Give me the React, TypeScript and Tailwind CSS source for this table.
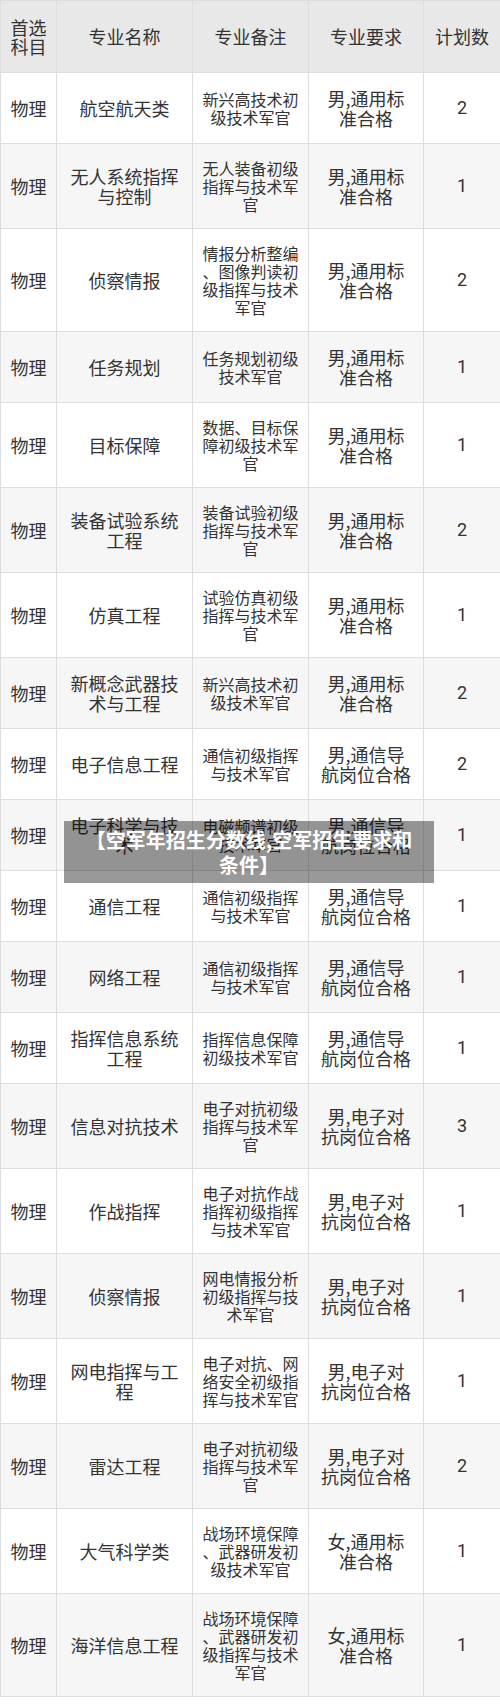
type Row = {
  name: string[]
  note: string[]
  req: string[]
  plan: number
}

const rows: Row[] = [
  { name: ['航空航天类'], note: ['新兴高技术初', '级技术军官'], req: ['男,通用标', '准合格'], plan: 2 },
  { name: ['无人系统指挥', '与控制'], note: ['无人装备初级', '指挥与技术军', '官'], req: ['男,通用标', '准合格'], plan: 1 },
  { name: ['侦察情报'], note: ['情报分析整编', '、图像判读初', '级指挥与技术', '军官'], req: ['男,通用标', '准合格'], plan: 2 },
  { name: ['任务规划'], note: ['任务规划初级', '技术军官'], req: ['男,通用标', '准合格'], plan: 1 },
  { name: ['目标保障'], note: ['数据、目标保', '障初级技术军', '官'], req: ['男,通用标', '准合格'], plan: 1 },
  { name: ['装备试验系统', '工程'], note: ['装备试验初级', '指挥与技术军', '官'], req: ['男,通用标', '准合格'], plan: 2 },
  { name: ['仿真工程'], note: ['试验仿真初级', '指挥与技术军', '官'], req: ['男,通用标', '准合格'], plan: 1 },
  { name: ['新概念武器技', '术与工程'], note: ['新兴高技术初', '级技术军官'], req: ['男,通用标', '准合格'], plan: 2 },
  { name: ['电子信息工程'], note: ['通信初级指挥', '与技术军官'], req: ['男,通信导', '航岗位合格'], plan: 2 },
  { name: ['电子科学与技', '术'], note: ['电磁频谱初级', '技术军官'], req: ['男,通信导', '航岗位合格'], plan: 1 },
  { name: ['通信工程'], note: ['通信初级指挥', '与技术军官'], req: ['男,通信导', '航岗位合格'], plan: 1 },
  { name: ['网络工程'], note: ['通信初级指挥', '与技术军官'], req: ['男,通信导', '航岗位合格'], plan: 1 },
  { name: ['指挥信息系统', '工程'], note: ['指挥信息保障', '初级技术军官'], req: ['男,通信导', '航岗位合格'], plan: 1 },
  { name: ['信息对抗技术'], note: ['电子对抗初级', '指挥与技术军', '官'], req: ['男,电子对', '抗岗位合格'], plan: 3 },
  { name: ['作战指挥'], note: ['电子对抗作战', '指挥初级指挥', '与技术军官'], req: ['男,电子对', '抗岗位合格'], plan: 1 },
  { name: ['侦察情报'], note: ['网电情报分析', '初级指挥与技', '术军官'], req: ['男,电子对', '抗岗位合格'], plan: 1 },
  { name: ['网电指挥与工', '程'], note: ['电子对抗、网', '络安全初级指', '挥与技术军官'], req: ['男,电子对', '抗岗位合格'], plan: 1 },
  { name: ['雷达工程'], note: ['电子对抗初级', '指挥与技术军', '官'], req: ['男,电子对', '抗岗位合格'], plan: 2 },
  { name: ['大气科学类'], note: ['战场环境保障', '、武器研发初', '级技术军官'], req: ['女,通用标', '准合格'], plan: 1 },
  { name: ['海洋信息工程'], note: ['战场环境保障', '、武器研发初', '级指挥与技术', '军官'], req: ['女,通用标', '准合格'], plan: 1 },
]

function Lines({ lines }: { lines: string[] }) {
  return (
    <>
      {lines.map((l, i) => (
        <span key={i} className="block whitespace-nowrap">
          {l}
        </span>
      ))}
    </>
  )
}

const cell = 'border border-[#dddddd] text-center align-middle py-[15px] px-0'

export default function App() {
  return (
    <div className="relative w-[500px] bg-white text-[#333333] font-['Noto_Sans_CJK_SC','Noto_Sans',sans-serif]">
      <table className="w-full table-fixed border-collapse">
        <colgroup>
          <col className="w-[56px]" />
          <col className="w-[136px]" />
          <col className="w-[116px]" />
          <col className="w-[115px]" />
          <col className="w-[77px]" />
        </colgroup>
        <thead>
          <tr className="h-[72px] bg-[#e8e8e8] text-[18px] leading-[19px] font-normal">
            <th className={`${cell} font-normal`}>
              <Lines lines={['首选', '科目']} />
            </th>
            <th className={`${cell} font-normal`}>专业名称</th>
            <th className={`${cell} font-normal`}>专业备注</th>
            <th className={`${cell} font-normal`}>专业要求</th>
            <th className={`${cell} font-normal`}>计划数</th>
          </tr>
        </thead>
        <tbody>
          {rows.map((r, i) => (
            <tr key={i} className={i % 2 === 0 ? 'bg-white' : 'bg-[#f6f6f6]'}>
              <td className={`${cell} text-[18px] leading-[20px]`}>物理</td>
              <td className={`${cell} text-[18px] leading-[20px]`}>
                <Lines lines={r.name} />
              </td>
              <td className={`${cell} text-[16px] leading-[18px]`}>
                <Lines lines={r.note} />
              </td>
              <td className={`${cell} text-[18px] leading-[20px]`}>
                <Lines lines={r.req} />
              </td>
              <td className={`${cell} text-[18px] leading-[20px] font-['Roboto','Noto_Sans_CJK_SC',sans-serif]`}>
                {r.plan}
              </td>
            </tr>
          ))}
        </tbody>
      </table>

      {/* caption banner over the table */}
      <div className="absolute left-[64px] top-[821px] w-[370px] h-[62px] bg-black/40 flex items-center justify-center px-[16px]">
        <p className="text-white font-bold text-[20px] leading-[25px] text-center">
          【空军年招生分数线,空军招生要求和
          <br />
          条件】
        </p>
      </div>
    </div>
  )
}
